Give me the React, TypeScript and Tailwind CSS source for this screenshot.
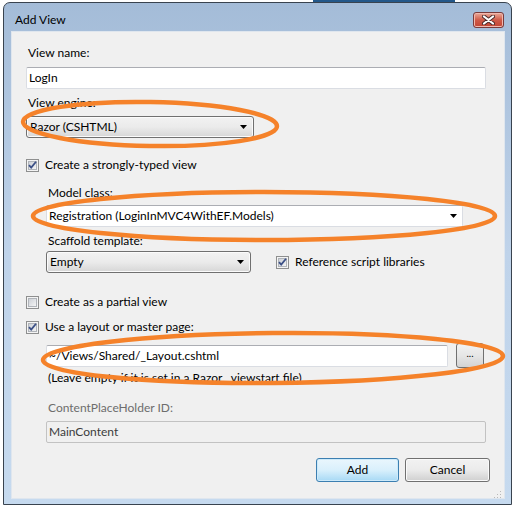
import React from "react";

// Win7 style "Add View" dialog with orange annotation ellipses on top

const font = "font-['Segoe_UI',Lato,'Noto_Sans',sans-serif]";

export default function App() {
  return (
    <div className={`relative h-[505px] w-[513px] overflow-hidden bg-white text-[12px] text-black ${font}`}>
      {/* strip of the window behind */}
      <div className="ml-[313px] h-[2px] w-[142px] bg-[#23588a]" />

      <div className="ml-[3px] flex h-[503px] w-[509px] flex-col rounded-t-[7px] border border-[#39434f] bg-gradient-to-b from-[#a4bcd8] via-[#bfd3ea] to-[#c6daef]">
        {/* title bar */}
        <div className="flex h-[28px] shrink-0 items-start justify-between">
          <span className="mt-[10px] ml-[11px] text-[12px] leading-[14px] text-black">Add View</span>
          <CloseButton />
        </div>

        {/* client area */}
        <div className="mb-[5px] ml-[7px] mr-[6px] flex flex-1 flex-col border border-[#dfe6ee] bg-[#f0f0f0] pl-[14px]">
          <Label className="mt-[13px]">View name:</Label>
          <TextBox value="LogIn" className="mt-[6px] w-[460px]" />

          <Label className="mt-[6px]">View engine:</Label>
          <ComboBox value="Razor (CSHTML)" className="mt-[5px] w-[228px]" />

          <CheckRow checked label="Create a strongly-typed view" className="mt-[19px]" />

          <div className="ml-[20px] flex flex-col">
            <Label className="mt-[12px]">Model class:</Label>
            <EditCombo value="Registration (LoginInMVC4WithEF.Models)" className="mt-[4px] w-[417px]" />

            <Label className="mt-[6px]">Scaffold template:</Label>
            <div className="mt-[2px] flex items-center">
              <ComboBox value="Empty" className="w-[205px]" />
              <CheckRow checked label="Reference script libraries" className="ml-[25px]" />
            </div>
          </div>

          <CheckRow label="Create as a partial view" className="mt-[21px]" />
          <CheckRow checked label="Use a layout or master page:" className="mt-[9px]" />

          <div className="ml-[20px] flex flex-col">
            <div className="mt-[8px] flex items-center">
              <TextBox value="~/Views/Shared/_Layout.cshtml" className="w-[402px]" />
              <button
                type="button"
                className="ml-[8px] h-[25px] w-[28px] rounded-[3px] border border-[#707070] bg-gradient-to-b from-[#f2f2f2] via-[#e6e6e6] to-[#d3d3d3] pb-[6px] text-[10px] leading-none text-black"
              >
                ...
              </button>
            </div>
            <Label className="mt-[2px]">(Leave empty if it is set in a Razor _viewstart file)</Label>

            <Label className="mt-[14px] text-[#6d6d6d]">ContentPlaceHolder ID:</Label>
            <div className="mt-[5px] flex h-[22px] w-[440px] items-center rounded-[2px] border border-[#c2c2c2] bg-[#f0f0f0] pl-[2px] text-[#3c3c3c]">
              MainContent
            </div>
          </div>

          <div className="mt-[15px] flex">
            <button
              type="button"
              className="ml-[290px] h-[24px] w-[83px] rounded-[3px] border border-[#3c7fb1] bg-gradient-to-b from-[#eaf6fd] via-[#d9f0fc] to-[#a7d9f5] text-black shadow-[inset_0_0_0_1px_#cdeafa]"
            >
              Add
            </button>
            <button
              type="button"
              className="ml-[6px] h-[24px] w-[85px] rounded-[3px] border border-[#707070] bg-gradient-to-b from-[#f2f2f2] via-[#ebebeb] to-[#cfcfcf] text-black shadow-[inset_0_0_0_1px_#fafafa]"
            >
              Cancel
            </button>
          </div>
        </div>
      </div>

      {/* grip */}
      <svg className="absolute left-[494px] top-[491px]" width="8" height="8" viewBox="0 0 8 8">
        <rect x="6" y="0" width="1" height="1" fill="#b8b8b8" />
        <rect x="3" y="3" width="1" height="1" fill="#b8b8b8" />
        <rect x="6" y="3" width="1" height="1" fill="#b8b8b8" />
        <rect x="0" y="6" width="1" height="1" fill="#b8b8b8" />
        <rect x="3" y="6" width="1" height="1" fill="#b8b8b8" />
        <rect x="6" y="6" width="1" height="1" fill="#b8b8b8" />
      </svg>

      {/* annotation ellipses */}
      <svg className="pointer-events-none absolute inset-0" width="513" height="505" viewBox="0 0 513 505">
        <g fill="none" stroke="#f5822a" strokeWidth="4.5">
          <ellipse cx="150" cy="124" rx="127" ry="22" transform="rotate(1 150 124)" />
          <ellipse cx="264" cy="216" rx="231" ry="24" />
          <ellipse cx="273" cy="358" rx="230" ry="25" transform="rotate(-0.5 273 358)" />
        </g>
      </svg>
    </div>
  );
}

// ── Pieces ─────────────────────────────────────────────────────────────────

function Label({ children, className = "" }: { children: React.ReactNode; className?: string }) {
  return <div className={`h-[16px] pl-[2px] leading-[16px] ${className}`}>{children}</div>;
}

function TextBox({ value, className = "" }: { value: string; className?: string }) {
  return (
    <div
      className={`flex h-[22px] items-center rounded-[2px] border border-[#dadde3] border-t-[#abadb3] bg-white pl-[2px] ${className}`}
    >
      {value}
    </div>
  );
}

function Arrow() {
  return (
    <svg width="7" height="4" viewBox="0 0 7 4">
      <path d="M0 0h7L3.5 4z" fill="#000" />
    </svg>
  );
}

function ComboBox({ value, className = "" }: { value: string; className?: string }) {
  return (
    <div
      className={`flex h-[22px] items-center justify-between rounded-[3px] border border-[#707070] bg-gradient-to-b from-[#f2f2f2] via-[#ebebeb] to-[#d6d6d6] pl-[3px] pr-[6px] shadow-[inset_0_0_0_1px_#fbfbfb] ${className}`}
    >
      <span>{value}</span>
      <Arrow />
    </div>
  );
}

function EditCombo({ value, className = "" }: { value: string; className?: string }) {
  return (
    <div
      className={`flex h-[22px] items-center justify-between rounded-[2px] border border-[#dadde3] border-t-[#abadb3] bg-white pl-[2px] pr-[5px] ${className}`}
    >
      <span>{value}</span>
      <Arrow />
    </div>
  );
}

function CheckRow({
  label,
  checked = false,
  className = "",
}: {
  label: string;
  checked?: boolean;
  className?: string;
}) {
  return (
    <div className={`flex h-[16px] items-center ${className}`}>
      <svg width="13" height="13" viewBox="0 0 13 13" className="shrink-0">
        <defs>
          <linearGradient id="cbg" x1="0" y1="0" x2="1" y2="1">
            <stop offset="0" stopColor="#cbcfd5" />
            <stop offset="1" stopColor="#f6f6f6" />
          </linearGradient>
        </defs>
        <rect x="0.5" y="0.5" width="12" height="12" fill="#f4f4f4" stroke="#8e8f8f" />
        <rect x="2.5" y="2.5" width="8" height="8" fill="url(#cbg)" stroke="#b0b4ba" />
        {checked && (
          <path d="M3 6.2l2.2 2.4L10 2.8" fill="none" stroke="#3b4f86" strokeWidth="1.8" />
        )}
      </svg>
      <span className="ml-[6px] leading-[16px]">{label}</span>
    </div>
  );
}

function CloseButton() {
  return (
    <div className="mt-[9px] mr-[7px] flex h-[16px] w-[31px] items-center justify-center rounded-[3px] border border-[#7a3b3b] bg-gradient-to-b from-[#e9a99a] via-[#cf5a48] to-[#c24433] shadow-[inset_0_0_0_1px_#f0b8ae]">
      <svg width="13" height="10" viewBox="0 0 13 10">
        <path d="M2 1.5l9 7M11 1.5l-9 7" stroke="#4a2a2a" strokeWidth="4" strokeLinecap="round" />
        <path d="M2 1.5l9 7M11 1.5l-9 7" stroke="#fff" strokeWidth="2.2" strokeLinecap="round" />
      </svg>
    </div>
  );
}
